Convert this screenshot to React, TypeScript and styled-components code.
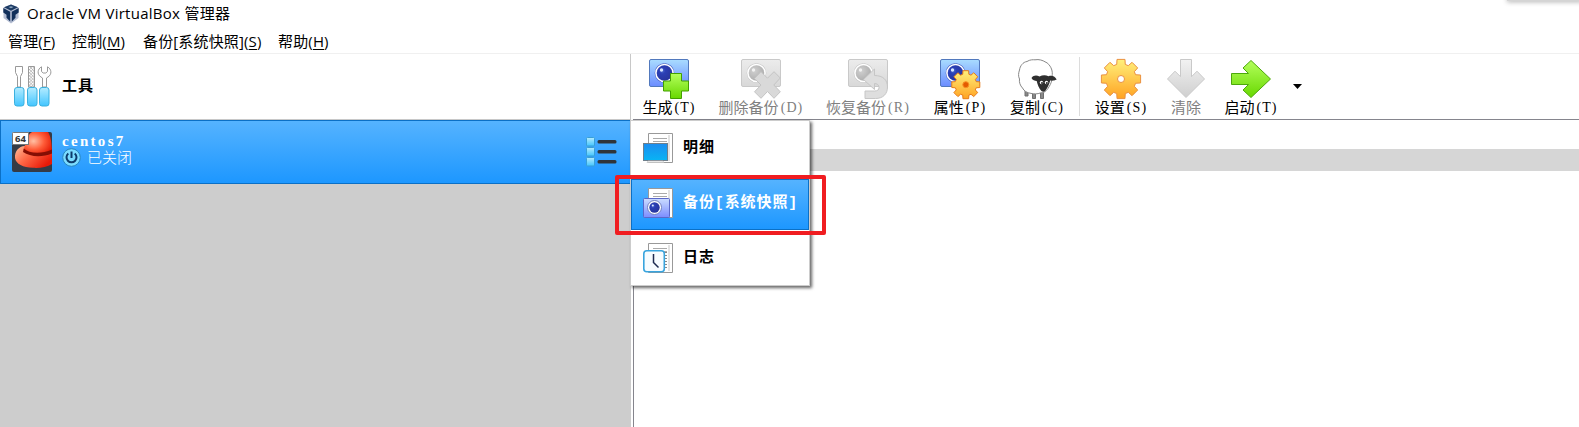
import React from 'react';
import styled, { createGlobalStyle, css } from 'styled-components';

const Global = createGlobalStyle`
  * { box-sizing: border-box; }
  html, body { margin: 0; padding: 0; overflow: hidden; background: #fff; }
  svg { display: block; flex: none; overflow: visible; }
`;

const Window = styled.div`
  position: relative;
  width: 1579px;
  height: 427px;
  display: flex;
  flex-direction: column;
  overflow: hidden;
  background: #fff;
  color: #000;
  font-family: 'Open Sans', 'Noto Sans CJK SC', sans-serif;
`;

const TitleBar = styled.header`
  height: 27px;
  display: flex;
  align-items: center;
  padding-left: 3px;
  gap: 8px;
  font-size: 15px;
  line-height: 26px;
  white-space: nowrap;
`;

const TitleText = styled.span`
  letter-spacing: 0.27px;
  height: 27px;
  white-space: nowrap;
`;

const MenuBar = styled.nav`
  height: 27px;
  display: flex;
  padding-left: 8px;
  border-bottom: 1px solid #f0f0f0;
  font-size: 15px;
  line-height: 29px;
  white-space: nowrap;
`;

const MenuEntry = styled.span<{ $w: number }>`
  width: ${p => p.$w}px;
  flex: none;
  letter-spacing: 0.15px;
  u { text-underline-offset: 2px; text-decoration-thickness: 1px; }
`;

const Body = styled.div`
  flex: 1;
  display: flex;
  min-height: 0;
`;

const Sidebar = styled.aside`
  width: 631px;
  flex: none;
  display: flex;
  flex-direction: column;
  background: #cdcdcd;
`;

const Tools = styled.div`
  height: 66px;
  display: flex;
  align-items: flex-start;
  padding: 12px 0 0 14px;
  gap: 11px;
  background: #fff;
  border-right: 1px solid #c8c8c8;
  border-bottom: 1px solid #c8c8c8;
`;

const BoldLabel = styled.span<{ $light?: boolean }>`
  font: 700 15px/20px 'Liberation Mono', 'Noto Sans CJK SC', monospace;
  letter-spacing: 0.9px;
  white-space: nowrap;
  color: ${p => (p.$light ? '#fff' : '#000')};
`;

const ToolsLabel = styled(BoldLabel)`
  margin-top: 12px;
`;

const selected = css`
  background: linear-gradient(#55b3ff, #1d97ff);
  border: 1px solid #0b70c6;
`;

const Machine = styled.div`
  ${selected}
  height: 64px;
  display: flex;
  align-items: center;
  padding: 0 13px 0 11px;
  color: #fff;
`;

const MachineInfo = styled.div`
  flex: 1;
  padding-left: 10px;
  margin-top: -4px;
  display: flex;
  flex-direction: column;
`;

const MachineName = styled.span`
  font: 700 15px/15px 'Liberation Serif', serif;
  letter-spacing: 2.3px;
  height: 14px;
`;

const MachineState = styled.span`
  display: flex;
  align-items: center;
  gap: 6px;
  font: 300 15px/20px 'Noto Sans CJK SC', sans-serif;
  height: 19px;
`;

const Content = styled.main`
  flex: 1;
  display: flex;
  flex-direction: column;
  min-width: 0;
`;

const Toolbar = styled.div`
  height: 65px;
  display: flex;
  padding-top: 5px;
  flex: none;
`;

const ToolButton = styled.div<{ $w: number; $off?: boolean }>`
  width: ${p => p.$w}px;
  flex: none;
  display: flex;
  flex-direction: column;
  align-items: center;
  color: ${p => (p.$off ? '#808080' : '#000')};
`;

const ToolText = styled.span`
  display: flex;
  font: 400 15px/18px 'Noto Sans CJK SC', sans-serif;
  white-space: nowrap;
  height: 18px;
  margin-top: -1px;
`;

const Key = styled.span`
  font: 400 14px/19px 'Liberation Serif', serif;
  letter-spacing: 1.1px;
  padding-left: 2px;
`;

const Divider = styled.i`
  width: 1px;
  height: 59px;
  margin: -2px 3px 0 4px;
  background: #dcdcdc;
`;

const Caret = styled.i`
  margin: 25px 0 0 4px;
  width: 9px;
  height: 5px;
  background: #000;
  clip-path: polygon(0 0, 100% 0, 50% 100%);
`;

const Details = styled.section`
  flex: 1;
  margin-left: 2px;
  border-left: 1px solid #85858d;
  border-top: 1px solid #85858d;
  padding-top: 29px;
`;

const ListHeader = styled.div`
  height: 22px;
  background: #d6d6d6;
`;

const Popup = styled.div`
  position: absolute;
  left: 630px;
  top: 120px;
  width: 180px;
  height: 166px;
  padding-top: 3px;
  display: flex;
  flex-direction: column;
  gap: 4px;
  background: #fff;
  border: 1px solid #ccc;
  box-shadow: 2px 2px 3px rgba(0, 0, 0, 0.6);
`;

const PopupItem = styled.div<{ $on?: boolean }>`
  height: 51px;
  display: flex;
  align-items: center;
  padding: 0 0 1px 11px;
  gap: 10px;
  border: 1px solid transparent;
  ${p => p.$on && selected}

  svg { margin-top: -2px; }
`;

const Highlight = styled.div`
  position: absolute;
  left: 615px;
  top: 175px;
  width: 211px;
  height: 60px;
  border: 4px solid #f01d21;
  border-radius: 2px;
`;

const OverlappingShadow = styled.div`
  position: absolute;
  right: -4px;
  top: -4px;
  width: 76px;
  height: 5px;
  background: #d4d4d4;
  box-shadow: 0 1px 5px rgba(0, 0, 0, 0.3);
`;

const Gradients = () => (
  <svg width="0" height="0" style={{ position: 'absolute' }}>
    <defs>
      <linearGradient id="cam" x2="0" y2="1"><stop stopColor="#a9dcff" /><stop offset="1" stopColor="#6b8cff" /></linearGradient>
      <linearGradient id="camOff" x2="0" y2="1"><stop stopColor="#ececec" /><stop offset="1" stopColor="#d8d8d8" /></linearGradient>
      <linearGradient id="camSmall" x2="0" y2="1"><stop stopColor="#cbdcff" /><stop offset="1" stopColor="#7c8cff" /></linearGradient>
      <linearGradient id="green" x2="0" y2="1"><stop stopColor="#b4ff5c" /><stop offset="1" stopColor="#68d800" /></linearGradient>
      <linearGradient id="gold" x2="0" y2="1"><stop stopColor="#fff07c" /><stop offset="1" stopColor="#ffa322" /></linearGradient>
      <linearGradient id="grey" x2="0" y2="1"><stop stopColor="#f2f2f2" /><stop offset="1" stopColor="#cfcfcf" /></linearGradient>
      <linearGradient id="sky" x2="0" y2="1"><stop stopColor="#b5ecff" /><stop offset="1" stopColor="#42c5ff" /></linearGradient>
      <linearGradient id="screen" x2="0" y2="1"><stop stopColor="#1b8df0" /><stop offset="1" stopColor="#08b4f4" /></linearGradient>
      <linearGradient id="hat" x1="0" x2="1" y2="0.6"><stop stopColor="#ffc09c" /><stop offset="0.45" stopColor="#ff6a48" /><stop offset="1" stopColor="#e81a08" /></linearGradient>
      <radialGradient id="crown" cx="0.35" cy="0.4" r="0.75"><stop stopColor="#ffc0a4" /><stop offset="0.5" stopColor="#ff5c38" /><stop offset="1" stopColor="#e01400" /></radialGradient>
      <radialGradient id="eye" cx="0.35" cy="0.35" r="0.7"><stop stopColor="#4a68d0" /><stop offset="0.3" stopColor="#2b3fb4" /><stop offset="1" stopColor="#28349c" /></radialGradient>
      <radialGradient id="eyeOff" cx="0.35" cy="0.35" r="0.7"><stop stopColor="#d0d0d0" /><stop offset="1" stopColor="#adadad" /></radialGradient>
      <pattern id="knurl" width="2.2" height="2.2" patternUnits="userSpaceOnUse" patternTransform="rotate(45)"><path d="M0 0H3M0 0V3" stroke="#aaa" strokeWidth="1" /></pattern>
    </defs>
  </svg>
);

const gear = (cx: number, cy: number, r: number) => {
  const pts: string[] = [];
  for (let i = 0; i < 8; i++) {
    const a = (i * Math.PI) / 4 - Math.PI / 2;
    ([[-0.285, 0.76], [-0.2, 1], [0.2, 1], [0.285, 0.76]] as const).forEach(([d, k]) => {
      pts.push(`${(cx + Math.cos(a + d) * r * k).toFixed(2)},${(cy + Math.sin(a + d) * r * k).toFixed(2)}`);
    });
  }
  return pts.join(' ');
};

const Camera = ({ off, children }: { off?: boolean; children?: React.ReactNode }) => (
  <svg width="40" height="40" viewBox="0 0 40 40">
    <rect x="0.5" y="0.5" width="39" height="27" rx="1.5" fill={off ? 'url(#camOff)' : 'url(#cam)'} stroke={off ? '#c9c9c9' : '#5279bd'} />
    <circle cx="15.5" cy="14" r="9.8" fill={off ? '#c4c4c4' : '#4056b8'} />
    <circle cx="15.5" cy="14" r="8.6" fill={off ? '#d4d4d4' : '#5d72cc'} stroke="#fff" strokeWidth="1.5" />
    <circle cx="15.5" cy="14" r="7.6" fill={off ? 'url(#eyeOff)' : 'url(#eye)'} />
    <circle cx="12.5" cy="11" r="1.7" fill={off ? '#f2f2f2' : '#d5e4ff'} />
    {children}
  </svg>
);

const TakeIcon = () => (
  <Camera><path d="M21.5 14.5h11v7.500h7v10h-7v7.500h-11v-7.500h-7v-10h7z" fill="url(#green)" stroke="#43a000" /></Camera>
);
const DeleteIcon = () => (
  <Camera off><path d="M20 12.700l6.500 6.500 6.500-6.500 6.300 6.300-6.500 7 6.500 6.800-6.300 6.500-6.500-6.800-6.500 6.800-6.500-6.500 6.500-6.800-6.500-6.500z" fill="#d9d9d9" stroke="#c4c4c4" /></Camera>
);
const RestoreIcon = () => (
  <Camera off><path d="M15.500 20.500L26.500 10v6.500C35 16.500 39.500 21 39.500 28c0 7-4.500 11.500-12 11.500H17v-7.500h9.500c3 0 4.500-1.200 4.500-3.500s-1.500-4-4.500-4v6z" fill="#dedede" stroke="#c6c6c6" /></Camera>
);
const PropsIcon = () => (
  <Camera>
    <polygon points={gear(25.8, 25.7, 14.3)} fill="url(#gold)" stroke="#e77b18" />
    <circle cx="25.800" cy="25.700" r="3" fill="#e45b00" stroke="#f79022" />
  </Camera>
);
const SheepIcon = () => (
  <svg width="40" height="40" viewBox="0 0 40 40">
    <path d="M8 31v6h3v-5M15.500 34v5.500h3V34M23.500 34v5.500h3V33" fill="#888" stroke="#6e6e6e" />
    <path d="M10 2.500c3-2 6-1.800 8-1.700 4-.8 8 .7 10 2 3 1 5 4 6 6 1.500 3 1.500 6 1 9 0 4-1 7-3 10-2 4-5 6-8 6-4 1.500-7 1.200-10 .6-4-.5-7-2.400-8.500-5.400-2.500-2.500-3.500-6-3-9-1.500-3-1-6 0-9C3 7 6 3 10 2.500z" fill="#fff" stroke="#888" />
    <path d="M14.500 19c2-2.800 5-3 8-1.500 3-1.500 6-1.600 9-.3 3-1 6-.4 8.200 3.300-2.700 1.300-4.700 1.300-6.500 1-1 4-3 8-5 10.500-1 1-2.700 1-3.800 0-2.500-3-4-6.500-4.700-10-2 0-4-.8-5.200-3z" fill="#2f2f2f" />
    <circle cx="24.500" cy="23.500" r="1.700" fill="#fff" /><circle cx="29.500" cy="23.500" r="1.700" fill="#fff" />
    <circle cx="25" cy="24" r="0.900" fill="#111" /><circle cx="29.900" cy="24" r="0.900" fill="#111" />
  </svg>
);
const SettingsIcon = () => (
  <svg width="40" height="40" viewBox="0 0 40 40">
    <path fillRule="evenodd" d={`M${gear(20, 20, 20).split(' ').join('L')}Z M16.500 20a3.500 3.500 0 1 0 7 0a3.500 3.500 0 1 0-7 0Z`} fill="url(#gold)" stroke="#ea9140" />
  </svg>
);
const DiscardIcon = () => (
  <svg width="40" height="40" viewBox="0 0 40 40">
    <path d="M14.500.5h11v17.200l5.500-5.500 7.500 7.800L20 38.500 1.500 20l7.500-7.800 5.500 5.500z" fill="url(#grey)" stroke="#c9c9c9" />
  </svg>
);
const StartIcon = () => (
  <svg width="40" height="40" viewBox="0 0 40 40">
    <path d="M.5 14.500h17l-5.500-5.500 8-7.500L39.500 20 20 38.500 12 31l5.500-5.500H.5z" fill="url(#green)" stroke="#4da80b" />
  </svg>
);

const VBoxLogo = () => (
  <svg width="16" height="20" viewBox="0 0 16 20">
    <path d="M8 .5l7.500 3v10.500L8 19.500.5 14v-10.500z" fill="#b4bdd2" />
    <path d="M1 3.200L8 .5l7 2.700L8 6.800z" fill="#1b3a63" />
    <path d="M.3 4L7.200 7.800v9.700L3.500 13.800v-3L.3 8.500z" fill="#12305a" />
    <path d="M15.700 4L8.800 7.800v9.700l3.700-3.700v-3l3.200-2.300z" fill="#12305a" />
    <path d="M5.500 3l2.500-.8 2.500.8L8 4.200z" fill="#8fa9c3" />
  </svg>
);

const ToolsIcon = () => (
  <svg width="37" height="41" viewBox="0 0 37 41">
    <g fill="#fff" stroke="#999">
      <path d="M1.500.5h7v6l-2 4V21h-3V10.500l-2-4z" />
      <path d="M14.500.5h6V21h-6z" fill="url(#knurl)" />
      <path d="M27.500.8c-4 2.200-4.800 7.500-.5 10.200l1.500 1V21h4v-9l1.500-1c4.300-2.700 3.500-8-.5-10.200V5.500L31.800 7h-2.600l-1.700-1.500z" />
    </g>
    {[0.5, 13.5, 25.5].map(x => (
      <rect key={x} x={x} y="21.500" width="9.500" height="18.500" rx="2.500" fill="url(#sky)" stroke="#3bb0de" />
    ))}
  </svg>
);

const Badge = styled.span`
  position: absolute;
  left: 0;
  top: 0;
  width: 17px;
  height: 13px;
  background: #fff;
  border: 1px solid #777;
  color: #333;
  font: 700 9.5px/11px 'Open Sans', sans-serif;
  text-align: center;
`;
const OsBox = styled.div`
  position: relative;
  width: 40px;
  height: 40px;
  border-radius: 2px;
  overflow: hidden;
  background: #353b46;
`;
const OsIcon = () => (
  <OsBox>
    <svg width="40" height="40" viewBox="0 0 40 40">
      <path d="M3 26C2.500 19 7 14.500 12.500 14L40 19v13c-5 3-12 4.300-19 3.800C11 35.500 4 32 3 26z" fill="url(#hat)" />
      <path d="M11.500 18C14 10 15 5 18 1.500L20 0h16c2.500 4 3.500 9 4 18.500-5 5-20 6.500-28.500-.5z" fill="url(#crown)" />
      <path d="M11.800 16.500C17 21.500 29 22.500 40 17.500v4c-10 4-22 3.500-29-1.500z" fill="#850e04" />
    </svg>
    <Badge>64</Badge>
  </OsBox>
);

const PowerIcon = () => (
  <svg width="19" height="19" viewBox="0 0 19 19">
    <circle cx="9.500" cy="9.500" r="8.800" fill="#7bdcff" stroke="#2886bd" />
    <path d="M6.300 5.500a5 5 0 1 0 6.400 0M9.500 3.500v6.500" fill="none" stroke="#0d3c6c" strokeWidth="2" />
  </svg>
);

const ListIcon = () => (
  <svg width="31" height="30" viewBox="0 0 31 30">
    {[0, 10, 20].map(y => (
      <g key={y}>
        <rect x="0.500" y={y + 0.500} width="8" height="8.500" rx="1" fill="url(#sky)" stroke="#399fd6" />
        <rect x="11.500" y={y + 3} width="19" height="3.600" rx="1.500" fill="#303439" />
      </g>
    ))}
  </svg>
);

const Sheet = ({ children }: { children: React.ReactNode }) => (
  <svg width="30" height="30" viewBox="0 0 30 30">
    <path d="M5.500.5h24v29h-24z" fill="#fff" stroke="#999" />
    <path d="M26 2v26" stroke="#e3e3e3" strokeWidth="2" />
    <path d="M10 5.500h14M10 8.500h14" stroke="#aaa" />
    {children}
  </svg>
);
const DetailsIcon = () => (
  <Sheet>
    <rect x="0.500" y="10.500" width="24" height="17" fill="url(#screen)" stroke="#6f7f8c" />
    <path d="M5 28h15l1 1.500H4z" fill="#fff" stroke="#bbb" strokeWidth="0.700" />
  </Sheet>
);
const SnapshotIcon = () => (
  <Sheet>
    <rect x="0.500" y="10.500" width="26" height="19" rx="1" fill="url(#camSmall)" stroke="#5b68c9" />
    <circle cx="11.500" cy="19.500" r="7" fill="#fff" stroke="#7180c0" />
    <circle cx="11.500" cy="19.500" r="5.200" fill="url(#eye)" />
    <circle cx="9.800" cy="17.600" r="1" fill="#dce8ff" />
  </Sheet>
);
const LogsIcon = () => (
  <Sheet>
    <path d="M21 9.500h3M21 12.500h3M21 15.500h3M21 18.500h3M21 21.500h3M21 24.500h3" stroke="#888" />
    <rect x="0.800" y="7.800" width="20.500" height="21" rx="3" fill="#f7fcff" stroke="#38a4de" strokeWidth="1.600" />
    <path d="M10.500 11v8.500l5 5" fill="none" stroke="#1d2a50" strokeWidth="1.500" />
  </Sheet>
);

type Action = { label: string; k?: string; w: number; off?: boolean; Icon: React.FC };
const snapshotActions: Action[] = [
  { label: '生成', k: '(T)', w: 76, Icon: TakeIcon },
  { label: '删除备份', k: '(D)', w: 108, off: true, Icon: DeleteIcon },
  { label: '恢复备份', k: '(R)', w: 106, off: true, Icon: RestoreIcon },
  { label: '属性', k: '(P)', w: 78, Icon: PropsIcon },
  { label: '复制', k: '(C)', w: 76, Icon: SheepIcon },
];
const machineActions: Action[] = [
  { label: '设置', k: '(S)', w: 76, Icon: SettingsIcon },
  { label: '清除', w: 54, off: true, Icon: DiscardIcon },
  { label: '启动', k: '(T)', w: 76, Icon: StartIcon },
];

const renderAction = ({ label, k, w, off, Icon }: Action) => (
  <ToolButton key={label} $w={w} $off={off}>
    <Icon />
    <ToolText>{label}{k && <Key>{k}</Key>}</ToolText>
  </ToolButton>
);

const menus = [
  { label: '管理', k: 'F', w: 64 },
  { label: '控制', k: 'M', w: 71 },
  { label: '备份[系统快照]', k: 'S', w: 135 },
  { label: '帮助', k: 'H', w: 60 },
];

export default function App() {
  return (
    <Window>
      <Global />
      <Gradients />
      <TitleBar>
        <VBoxLogo />
        <TitleText>Oracle VM VirtualBox 管理器</TitleText>
      </TitleBar>
      <MenuBar>
        {menus.map(m => (
          <MenuEntry key={m.k} $w={m.w}>{m.label}(<u>{m.k}</u>)</MenuEntry>
        ))}
      </MenuBar>
      <Body>
        <Sidebar>
          <Tools>
            <ToolsIcon />
            <ToolsLabel>工具</ToolsLabel>
          </Tools>
          <Machine>
            <OsIcon />
            <MachineInfo>
              <MachineName>centos7</MachineName>
              <MachineState><PowerIcon />已关闭</MachineState>
            </MachineInfo>
            <ListIcon />
          </Machine>
        </Sidebar>
        <Content>
          <Toolbar>
            {snapshotActions.map(renderAction)}
            <Divider />
            {machineActions.map(renderAction)}
            <Caret />
          </Toolbar>
          <Details><ListHeader /></Details>
        </Content>
      </Body>
      <Popup>
        <PopupItem><DetailsIcon /><BoldLabel>明细</BoldLabel></PopupItem>
        <PopupItem $on><SnapshotIcon /><BoldLabel $light>备份[系统快照]</BoldLabel></PopupItem>
        <PopupItem><LogsIcon /><BoldLabel>日志</BoldLabel></PopupItem>
      </Popup>
      <Highlight />
      <OverlappingShadow />
    </Window>
  );
}
